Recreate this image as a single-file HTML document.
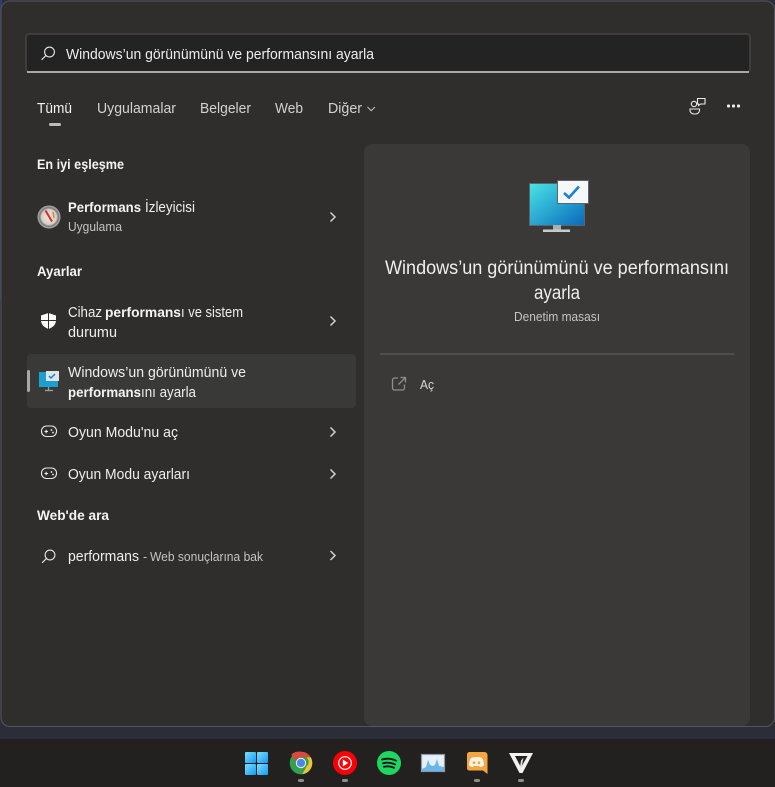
<!DOCTYPE html>
<html><head><meta charset="utf-8">
<style>
html,body{margin:0;padding:0;width:775px;height:787px;overflow:hidden;background:#222120}
svg{display:block}
text{font-family:"Liberation Sans",sans-serif;font-size:14.5px;fill:#eeeeee}
.b{font-weight:bold;fill:#f4f4f4;font-size:14px}
.t{fill:#d2d2d2}
.s{font-size:12.5px;fill:#c4c4c4}
.i{fill:none;stroke:#e8e8e8;stroke-width:1.1}
</style></head><body>
<svg width="775" height="787" viewBox="0 0 775 787" xmlns="http://www.w3.org/2000/svg">
<defs>
<linearGradient id="mon" x1="0" y1="0" x2="1" y2="1"><stop offset="0" stop-color="#49e4e6"/><stop offset="1" stop-color="#0a68bc"/></linearGradient>
<linearGradient id="win" x1="0" y1="0" x2="1" y2="1"><stop offset="0" stop-color="#7fdcfb"/><stop offset="1" stop-color="#0f9cf5"/></linearGradient>
<radialGradient id="g"><stop offset="0" stop-color="#f0e6dc"/><stop offset=".66" stop-color="#d8cfc4"/><stop offset=".8" stop-color="#77777a"/><stop offset="1" stop-color="#b5b5b2"/></radialGradient>
</defs>
<rect width="775" height="787" fill="#222120"/>
<rect width="775" height="739" fill="#2b2e38"/>
<rect x="0" y="0" width="2" height="300" fill="#2a3f6e"/>
<rect x="1" y="1" width="773.500" height="725.500" rx="9" fill="#2f2e2d" stroke="#55555a" stroke-width="1"/>

<!-- search -->
<rect x="26" y="34" width="724" height="38" rx="3" fill="#232323" stroke="#3e3d3c" stroke-width="2"/>
<path d="M27 72h722" stroke="#a7a7a5" stroke-width="2"/>
<circle cx="49.500" cy="52" r="4.900" class="i"/>
<path d="M45.800 55.600L41.600 59.800" class="i" stroke-width="1.300"/>
<text x="66" y="59" textLength="308" lengthAdjust="spacingAndGlyphs" style="font-size:15px">Windows’un görünümünü ve performansını ayarla</text>

<!-- tabs -->
<text x="37" y="113" textLength="35" lengthAdjust="spacingAndGlyphs" style="fill:#f2f2f2">Tümü</text>
<text x="97" y="113" textLength="79" lengthAdjust="spacingAndGlyphs" class="t">Uygulamalar</text>
<text x="200" y="113" textLength="51" lengthAdjust="spacingAndGlyphs" class="t">Belgeler</text>
<text x="275" y="113" textLength="28" lengthAdjust="spacingAndGlyphs" class="t">Web</text>
<text x="328" y="113" textLength="34" lengthAdjust="spacingAndGlyphs" class="t">Diğer</text>
<path d="M367.500 107l3.700 3.700 3.700-3.700" fill="none" stroke="#c8c8c8" stroke-width="1"/>
<rect x="49" y="123" width="12" height="3" rx="1.500" fill="#bcbcbc"/>
<!-- top right icons -->
<circle cx="694" cy="104" r="2.700" class="i" stroke-width="1"/>
<path d="M690 109h9.500v1.500a4 3.500 0 0 1-4 3.500h-1.500a4 3.500 0 0 1-4-3.500z" class="i" stroke-width="1"/>
<path d="M697.500 98.500h7.500v5.500h-4.500l-2 1.500v-1.500h-1z" class="i" stroke-width="1"/>
<rect x="727" y="104.500" width="3" height="3" rx="1" fill="#f0f0f0"/><rect x="732" y="104.500" width="3" height="3" rx="1" fill="#f0f0f0"/><rect x="737" y="104.500" width="3" height="3" rx="1" fill="#f0f0f0"/>

<!-- best match -->
<text x="37" y="169" textLength="87" lengthAdjust="spacingAndGlyphs" class="b">En iyi eşleşme</text>
<circle cx="49" cy="217" r="11.500" fill="url(#g)"/>
<path d="M45.500 210.500l6.500 11" stroke="#d92b2b" stroke-width="2"/><path d="M53 212l1 6" stroke="#d08a3a" stroke-width="1.500"/>
<text x="68" y="212" textLength="73" lengthAdjust="spacingAndGlyphs" class="b">Performans</text>
<text x="145" y="212" textLength="50" lengthAdjust="spacingAndGlyphs">İzleyicisi</text>
<text x="68" y="231" textLength="54" lengthAdjust="spacingAndGlyphs" class="s">Uygulama</text>
<path d="M330.500 212.500l4.500 4.500-4.500 4.500" fill="none" stroke="#d0d0d0" stroke-width="1.500"/>

<!-- settings -->
<text x="37" y="276" textLength="45" lengthAdjust="spacingAndGlyphs" class="b">Ayarlar</text>
<path d="M48.500 313l7.500 2.500v4.500c0 5-3.500 7.500-7.500 9-4-1.500-7.500-4-7.500-9v-4.500z" fill="#fbfbfb"/>
<path d="M48.500 313v16M41 320.500h15" stroke="#2f2e2d" stroke-width="1"/>
<text x="68" y="317" textLength="34" lengthAdjust="spacingAndGlyphs">Cihaz</text>
<text x="105" y="317" textLength="76" lengthAdjust="spacingAndGlyphs" class="b">performans</text>
<text x="181" y="317" textLength="62" lengthAdjust="spacingAndGlyphs">ı ve sistem</text>
<text x="68" y="337" textLength="49" lengthAdjust="spacingAndGlyphs">durumu</text>
<path d="M330.500 316.500l4.500 4.500-4.500 4.500" fill="none" stroke="#d0d0d0" stroke-width="1.500"/>

<rect x="27" y="354" width="329" height="54" rx="4" fill="#393938"/>
<rect x="27" y="370" width="3" height="22" rx="1.500" fill="#a8a8a8"/>
<rect x="39" y="372" width="19" height="15" fill="#1b9fd0"/>
<rect x="46" y="371" width="13" height="10" fill="#dfe6ea"/>
<path d="M49 376l2 2 4-4" fill="none" stroke="#1a7fd6" stroke-width="1.500"/>
<path d="M48.500 387v3M45 390.500h8" stroke="#9aa3a8" stroke-width="1.200"/>
<text x="68" y="377" textLength="178" lengthAdjust="spacingAndGlyphs">Windows’un görünümünü ve</text>
<text x="68" y="397" textLength="73" lengthAdjust="spacingAndGlyphs" class="b">performans</text>
<text x="141" y="397" textLength="55" lengthAdjust="spacingAndGlyphs">ını ayarla</text>

<!-- game mode -->
<rect x="41.500" y="426" width="15" height="10.500" rx="5" class="i"/><path d="M44.500 431.500h3.500M46.200 429.800v3.500" class="i" stroke-width="1"/><circle cx="51.500" cy="430" r=".9" fill="#f0f0f0"/><circle cx="53" cy="432.500" r=".9" fill="#f0f0f0"/>
<text x="68" y="437" textLength="110" lengthAdjust="spacingAndGlyphs">Oyun Modu'nu aç</text>
<path d="M330.500 427.500l4.500 4.500-4.500 4.500" fill="none" stroke="#d0d0d0" stroke-width="1.500"/>
<g transform="translate(0 42)"><rect x="41.500" y="426" width="15" height="10.500" rx="5" class="i"/><path d="M44.500 431.500h3.500M46.200 429.800v3.500" class="i" stroke-width="1"/><circle cx="51.500" cy="430" r=".9" fill="#f0f0f0"/><circle cx="53" cy="432.500" r=".9" fill="#f0f0f0"/></g>
<text x="68" y="479" textLength="122" lengthAdjust="spacingAndGlyphs">Oyun Modu ayarları</text>
<path d="M330.500 469.500l4.500 4.500-4.500 4.500" fill="none" stroke="#d0d0d0" stroke-width="1.500"/>

<!-- web -->
<text x="37" y="520" textLength="72" lengthAdjust="spacingAndGlyphs" class="b">Web'de ara</text>
<circle cx="50" cy="555" r="4.900" class="i"/>
<path d="M46.300 558.600l-4.200 4.200" class="i" stroke-width="1.300"/>
<text x="68" y="561" textLength="71" lengthAdjust="spacingAndGlyphs">performans</text>
<text x="143" y="561" class="s">-</text>
<text x="150" y="561" textLength="113" lengthAdjust="spacingAndGlyphs" class="s">Web sonuçlarına bak</text>
<path d="M330.500 551l4.500 4.500-4.500 4.500" fill="none" stroke="#d0d0d0" stroke-width="1.500"/>

<!-- right panel -->
<rect x="364" y="144" width="386" height="582" rx="8" fill="#3a3938"/>
<rect x="529.500" y="183.500" width="55" height="42" fill="url(#mon)" stroke="#5f6468"/>
<rect x="553" y="225" width="8" height="5" fill="#a8b0b4"/>
<rect x="543" y="229.500" width="27" height="2.500" fill="#c6ccd0"/>
<rect x="557.500" y="180.500" width="31" height="23" fill="#f5f7f8" stroke="#5f6468"/>
<path d="M564 193l5 4.500 10-11" fill="none" stroke="#1b80d8" stroke-width="2.600"/>
<text x="385" y="274" textLength="344" lengthAdjust="spacingAndGlyphs" style="font-size:19px">Windows’un görünümünü ve performansını</text>
<text x="534" y="299" textLength="46" lengthAdjust="spacingAndGlyphs" style="font-size:19px">ayarla</text>
<text x="514" y="321" textLength="86" lengthAdjust="spacingAndGlyphs" class="s">Denetim masası</text>
<rect x="380" y="353" width="354" height="2" fill="#4f4e4d"/>
<path d="M398 378h-3.500a2 2 0 0 0-2 2v8a2 2 0 0 0 2 2h8a2 2 0 0 0 2-2v-3.500" fill="none" stroke="#8e8e8d" stroke-width="1.300"/>
<path d="M398.500 384.500l6.500-6.500M400.500 377.500h5v5" fill="none" stroke="#8e8e8d" stroke-width="1.300"/>
<text x="420" y="389" textLength="14" lengthAdjust="spacingAndGlyphs" class="s" style="font-size:13px;fill:#d8d8d8">Aç</text>

<!-- taskbar -->
<rect x="0" y="739" width="775" height="48" fill="#222120"/>
<g fill="url(#win)">
<rect x="245" y="752" width="11" height="11" rx="1"/><rect x="257" y="752" width="11" height="11" rx="1"/>
<rect x="245" y="764" width="11" height="11" rx="1"/><rect x="257" y="764" width="11" height="11" rx="1"/>
</g>
<!-- chrome -->
<circle cx="301" cy="763" r="11.300" fill="#34a04f"/>
<path d="M301 751.700a11.300 11.300 0 0 1 9.800 5.700H301a5.600 5.600 0 0 0-5.300 3.800l-4.400-6.600a11.300 11.300 0 0 1 9.700-2.900z" fill="#d9493c"/>
<path d="M310.800 757.400a11.300 11.300 0 0 1-8.500 16.800l4.400-8a5.600 5.600 0 0 0-.3-8.800z" fill="#f0c236"/>
<circle cx="301" cy="763" r="5.200" fill="#e9e9e9"/><circle cx="301" cy="763" r="4.100" fill="#4a86e8"/>
<!-- yt music -->
<circle cx="345" cy="763" r="12" fill="#fb0007"/>
<circle cx="345" cy="763" r="6.300" fill="none" stroke="#fff" stroke-width="1.200"/>
<path d="M342.800 759.500v7l5.500-3.500z" fill="#fff"/>
<!-- spotify -->
<circle cx="389" cy="763" r="12" fill="#1ed760"/>
<path d="M382 759.500c4.500-1.300 10-1 14 1.200M383 763.300c4-1 8.500-.7 12 1.200M384 766.800c3.300-.8 7-.5 10 1" fill="none" stroke="#15151a" stroke-width="1.900" stroke-linecap="round"/>
<!-- perf mon -->
<rect x="421.500" y="754.500" width="23" height="17" fill="#e6f0f8" stroke="#8b99a6" stroke-width="1.200"/>
<path d="M422 769l4-2 2-7 2 5 3 1 2-1 2-6 2 7 5 1v4h-22z" fill="#6ab6ea"/>
<!-- discord -->
<path d="M469 752h15.500a3 3 0 0 1 3 3v19l-4.500-3.500H469a2.500 2.500 0 0 1-2-2.500v-13.500a3 3 0 0 1 2-2.500z" fill="#f4a640"/>
<path d="M471 758c3.500-1.300 7.500-1.300 11 0 1.500 2.300 2 4.700 2 7.500-1.400 1-2.700 1.500-4 1.700l-.8-1.400c-2.200.5-3.200.5-5.400 0l-.8 1.400c-1.300-.2-2.600-.7-4-1.700 0-2.800.5-5.200 2-7.500z" fill="#fdf3e3"/>
<circle cx="474" cy="762.800" r="1.400" fill="#f4a640"/><circle cx="479" cy="762.800" r="1.400" fill="#f4a640"/>
<!-- last -->
<path d="M509 753h24l-10.500 20h-3z" fill="#f2f2f2"/>
<path d="M515 756h12.500l-6.500 11.500z" fill="#222120"/>
<path d="M518.500 757.500l1.500 9 1-6 2.500-3-1.500 8-1 3.500-1-3z" fill="#dcdcdc"/>
<g fill="#8e8e8c">
<rect x="298" y="779" width="6" height="3" rx="1.500"/><rect x="342" y="779" width="6" height="3" rx="1.500"/>
<rect x="474" y="779" width="6" height="3" rx="1.500"/><rect x="518" y="779" width="6" height="3" rx="1.500"/>
</g>
</svg>
</body></html>
